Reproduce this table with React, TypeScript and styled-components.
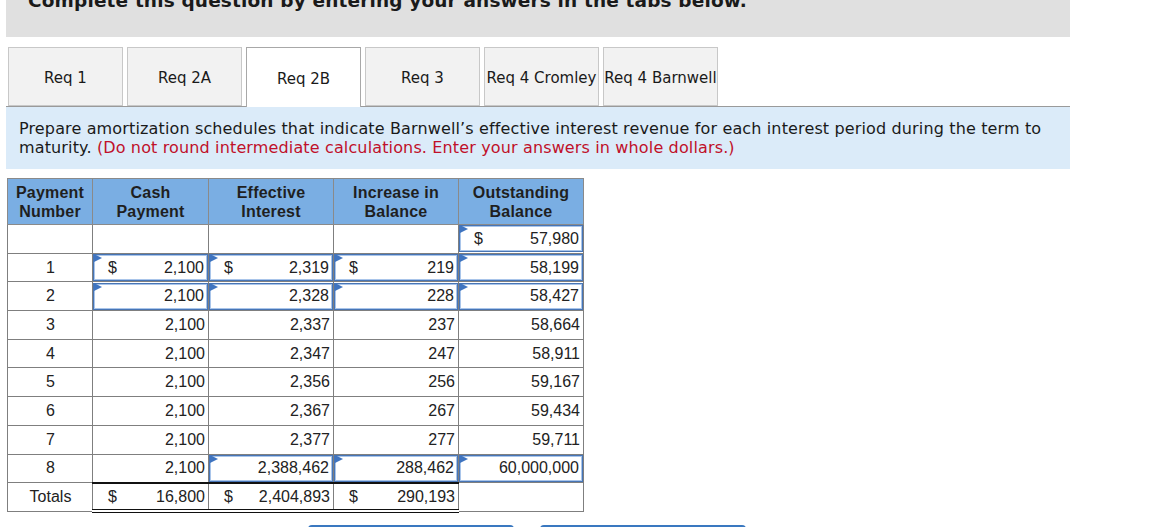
import React from "react";
import styled, { createGlobalStyle } from "styled-components";

const GlobalStyle = createGlobalStyle`
  html, body { margin: 0; padding: 0; background: #fff; }
  body { font-family: "DejaVu Sans", Verdana, sans-serif; overflow: hidden; }
`;

const Page = styled.div`
  width: 1064px;
  padding-left: 6px;
`;

const Banner = styled.div`
  height: 37px;
  background: #e0e0e0;
  box-sizing: border-box;
  overflow: hidden;
`;

const BannerText = styled.div`
  font-family: "DejaVu Sans", Verdana, sans-serif;
  font-weight: bold;
  font-size: 18.5px;
  letter-spacing: 0.15px;
  line-height: 20px;
  color: #1a1a1a;
  padding-left: 22px;
  margin-top: -9px;
  white-space: nowrap;
`;

const TabBar = styled.div`
  display: flex;
  gap: 4px;
  margin-top: 10px;
  padding-left: 2px;
  border-bottom: 1px solid #9a9a9a;
  height: 59px;
`;

const Tab = styled.div<{ $active?: boolean }>`
  width: 115px;
  height: ${(p) => (p.$active ? "60px" : "59px")};
  box-sizing: border-box;
  display: flex;
  align-items: center;
  justify-content: center;
  font-size: 15px;
  color: #1a1a1a;
  background: ${(p) => (p.$active ? "#ffffff" : "#f2f2f2")};
  border: 1px solid ${(p) => (p.$active ? "#a8a8a8" : "#c8c8c8")};
  border-bottom: ${(p) => (p.$active ? "none" : "1px solid #c8c8c8")};
  padding-top: 3px;
  white-space: nowrap;
`;

const Instruction = styled.div`
  background: #dbebf9;
  padding: 12px 13px 12px 13px;
  font-size: 16px;
  line-height: 19px;
  letter-spacing: 0.14px;
  color: #1a1a1a;
`;

const Note = styled.span`
  color: #c0102a;
`;

const Table = styled.table`
  margin-top: 9px;
  margin-left: 1px;
  border-collapse: collapse;
  table-layout: fixed;
  width: 576px;
  font-family: "Liberation Sans", Arial, sans-serif;
  font-size: 16px;
  color: #222;
`;

const Th = styled.th`
  background: #7aaee3;
  border: 1px solid #8a8a8a;
  font-weight: bold;
  font-size: 16px;
  line-height: 19px;
  letter-spacing: 0.2px;
  height: 45px;
  padding: 0;
  color: #1f1f1f;
  vertical-align: middle;
`;

const Td = styled.td<{ $total?: boolean; $center?: boolean }>`
  border: 1px solid #7f7f7f;
  height: 28.7px;
  padding: 0 3px 0 4px;
  box-sizing: border-box;
  text-align: ${(p) => (p.$center ? "center" : "right")};
  vertical-align: middle;
  ${(p) =>
    p.$total
      ? `border-top: 2px solid #111; border-bottom: 4px double #111;`
      : ""}
`;

const InputTd = styled.td`
  border: 1px solid #7f7f7f;
  height: 28.7px;
  padding: 0;
  box-sizing: border-box;
  vertical-align: middle;
`;

const InputBox = styled.div`
  position: relative;
  height: 27px;
  box-sizing: border-box;
  border: 1px solid #4775b6;
  box-shadow: inset 0 0 0 1px #a9c5ea;
  background: #fff;
  display: flex;
  align-items: center;
  justify-content: space-between;
  padding: 0 3px 0 14px;
  &::before {
    content: "";
    position: absolute;
    left: 0px;
    top: -1px;
    width: 0;
    height: 0;
    border-top: 4px solid transparent;
    border-bottom: 4px solid transparent;
    border-left: 8px solid #3f74c0;
  }
`;

const Cur = styled.span``;
const Num = styled.span`
  margin-left: auto;
`;

const Money = styled.div`
  display: flex;
  justify-content: space-between;
  padding-left: 11px;
`;

const ButtonRow = styled.div`
  display: flex;
  gap: 26px;
  margin-top: 12px;
  padding-left: 302px;
`;

const NavButton = styled.div`
  width: 206px;
  height: 40px;
  box-sizing: border-box;
  border: 2px solid #3a78c0;
  border-radius: 4px;
  background: #fff;
`;

type Cell = { v: string; dollar?: boolean; input?: boolean } | null;

const rows: { n: string; cells: Cell[] }[] = [
  { n: "", cells: [null, null, null, { v: "57,980", dollar: true, input: true }] },
  {
    n: "1",
    cells: [
      { v: "2,100", dollar: true, input: true },
      { v: "2,319", dollar: true, input: true },
      { v: "219", dollar: true, input: true },
      { v: "58,199", input: true },
    ],
  },
  {
    n: "2",
    cells: [
      { v: "2,100", input: true },
      { v: "2,328", input: true },
      { v: "228", input: true },
      { v: "58,427", input: true },
    ],
  },
  { n: "3", cells: [{ v: "2,100" }, { v: "2,337" }, { v: "237" }, { v: "58,664" }] },
  { n: "4", cells: [{ v: "2,100" }, { v: "2,347" }, { v: "247" }, { v: "58,911" }] },
  { n: "5", cells: [{ v: "2,100" }, { v: "2,356" }, { v: "256" }, { v: "59,167" }] },
  { n: "6", cells: [{ v: "2,100" }, { v: "2,367" }, { v: "267" }, { v: "59,434" }] },
  { n: "7", cells: [{ v: "2,100" }, { v: "2,377" }, { v: "277" }, { v: "59,711" }] },
  {
    n: "8",
    cells: [
      { v: "2,100" },
      { v: "2,388,462", input: true },
      { v: "288,462", input: true },
      { v: "60,000,000", input: true },
    ],
  },
];

const tabs = ["Req 1", "Req 2A", "Req 2B", "Req 3", "Req 4 Cromley", "Req 4 Barnwell"];

function renderCell(c: Cell, i: number) {
  if (!c) return <Td key={i} />;
  if (c.input)
    return (
      <InputTd key={i}>
        <InputBox>
          {c.dollar && <Cur>$</Cur>}
          <Num>{c.v}</Num>
        </InputBox>
      </InputTd>
    );
  return <Td key={i}>{c.v}</Td>;
}

export default function App() {
  return (
    <Page>
      <GlobalStyle />
      <Banner>
        <BannerText>Complete this question by entering your answers in the tabs below.</BannerText>
      </Banner>
      <TabBar>
        {tabs.map((t) => (
          <Tab key={t} $active={t === "Req 2B"}>
            {t}
          </Tab>
        ))}
      </TabBar>
      <Instruction>
        Prepare amortization schedules that indicate Barnwell’s effective interest revenue for each interest period during the term to maturity.{" "}
        <Note>(Do not round intermediate calculations. Enter your answers in whole dollars.)</Note>
      </Instruction>
      <Table>
        <colgroup>
          <col style={{ width: 85 }} />
          <col style={{ width: 116 }} />
          <col style={{ width: 125 }} />
          <col style={{ width: 125 }} />
          <col style={{ width: 125 }} />
        </colgroup>
        <thead>
          <tr>
            <Th>
              Payment
              <br />
              Number
            </Th>
            <Th>
              Cash
              <br />
              Payment
            </Th>
            <Th>
              Effective
              <br />
              Interest
            </Th>
            <Th>
              Increase in
              <br />
              Balance
            </Th>
            <Th>
              Outstanding
              <br />
              Balance
            </Th>
          </tr>
        </thead>
        <tbody>
          {rows.map((r, ri) => (
            <tr key={ri}>
              <Td $center>{r.n}</Td>
              {r.cells.map((c, i) => renderCell(c, i))}
            </tr>
          ))}
          <tr>
            <Td $center>Totals</Td>
            <Td $total>
              <Money>
                <span>$</span>
                <span>16,800</span>
              </Money>
            </Td>
            <Td $total>
              <Money>
                <span>$</span>
                <span>2,404,893</span>
              </Money>
            </Td>
            <Td $total>
              <Money>
                <span>$</span>
                <span>290,193</span>
              </Money>
            </Td>
            <Td />
          </tr>
        </tbody>
      </Table>
      <ButtonRow>
        <NavButton />
        <NavButton />
      </ButtonRow>
    </Page>
  );
}
